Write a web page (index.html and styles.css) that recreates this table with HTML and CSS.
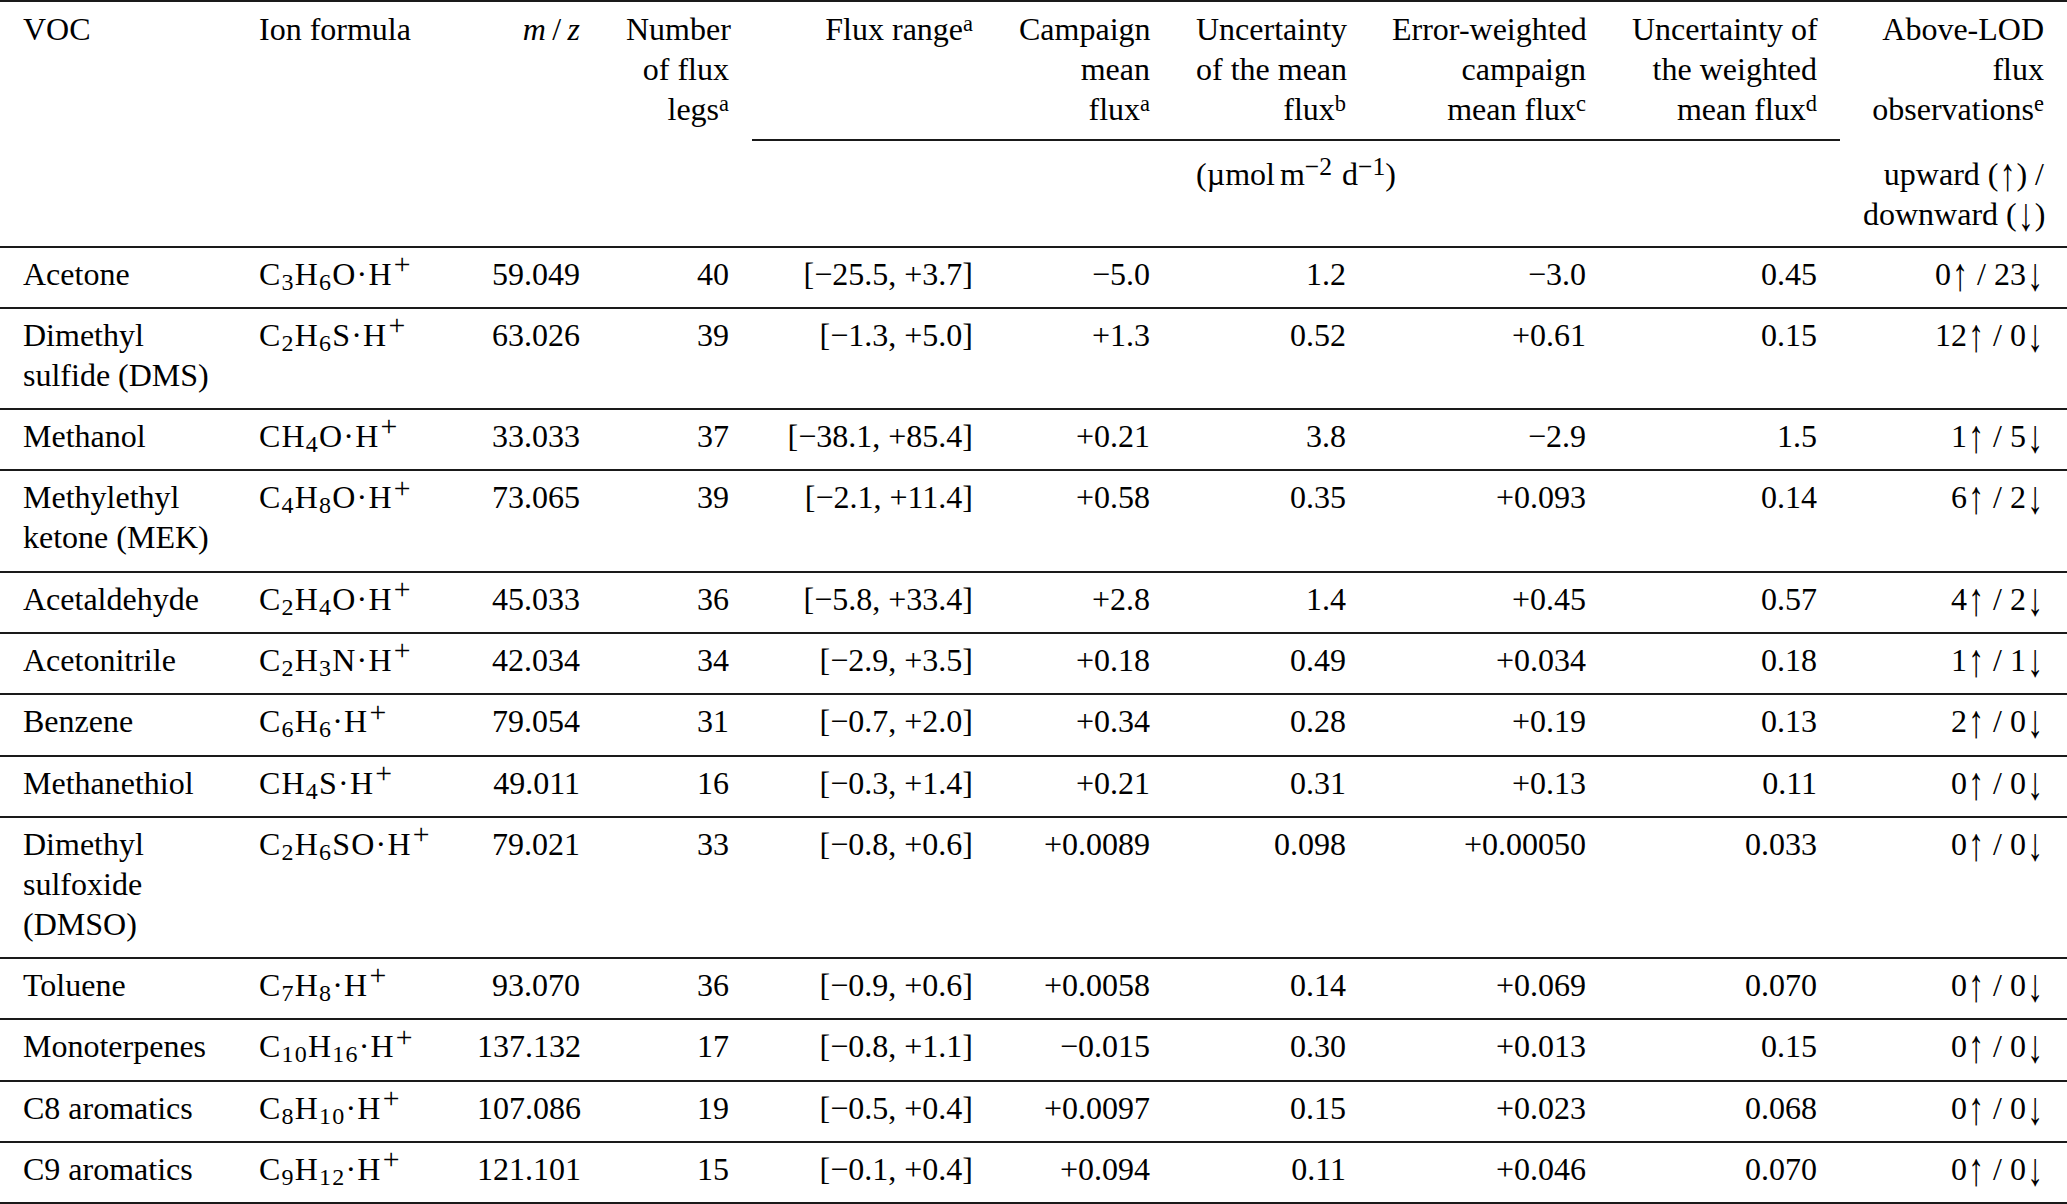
FILE: index.html
```html
<!DOCTYPE html>
<html lang="en">
<head>
<meta charset="utf-8">
<title>VOC flux table</title>
<link rel="stylesheet" href="styles.css">
</head>
<body>
<table class="flux-table">
  <colgroup>
    <col class="c-voc"><col class="c-ion"><col class="c-mz"><col class="c-legs"><col class="c-range">
    <col class="c-mean"><col class="c-unc"><col class="c-wmean"><col class="c-wunc"><col class="c-lod">
  </colgroup>
  <thead>
    <tr class="head-main">
      <th class="left span2" rowspan="2">VOC</th>
      <th class="left span2" rowspan="2">Ion formula</th>
      <th class="right span2" rowspan="2"><i>m</i>&thinsp;/&thinsp;<i>z</i></th>
      <th class="right span2" rowspan="2">Number<br>of flux<br>legs<sup>a</sup></th>
      <th class="right grp">Flux range<sup>a</sup></th>
      <th class="right grp">Campaign<br>mean<br>flux<sup>a</sup></th>
      <th class="right grp">Uncertainty<br>of the mean<br>flux<sup>b</sup></th>
      <th class="right grp">Error-weighted<br>campaign<br>mean flux<sup>c</sup></th>
      <th class="right grp">Uncertainty of<br>the weighted<br>mean flux<sup>d</sup></th>
      <th class="right">Above-LOD<br>flux<br>observations<sup>e</sup></th>
    </tr>
    <tr class="head-sub">
      <th class="center units" colspan="5">(µmol<span class="gap-s"></span>m<sup>−2</sup><span class="gap"></span>d<sup>−1</sup>)</th>
      <th class="right">upward (<span class="arr">↑</span>) /<br>downward (<span class="arr">↓</span>)</th>
    </tr>
  </thead>
  <tbody>
    <tr>
      <td>Acetone</td>
      <td class="ion">C<sub>3</sub>H<sub>6</sub>O·H<sup>+</sup></td>
      <td class="right">59.049</td><td class="right">40</td><td class="right">[−25.5, +3.7]</td>
      <td class="right">−5.0</td><td class="right">1.2</td><td class="right">−3.0</td><td class="right">0.45</td>
      <td class="right">0<span class="arr">↑</span> / 23<span class="arr">↓</span></td>
    </tr>
    <tr>
      <td>Dimethyl<br>sulfide (DMS)</td>
      <td class="ion">C<sub>2</sub>H<sub>6</sub>S·H<sup>+</sup></td>
      <td class="right">63.026</td><td class="right">39</td><td class="right">[−1.3, +5.0]</td>
      <td class="right">+1.3</td><td class="right">0.52</td><td class="right">+0.61</td><td class="right">0.15</td>
      <td class="right">12<span class="arr">↑</span> / 0<span class="arr">↓</span></td>
    </tr>
    <tr>
      <td>Methanol</td>
      <td class="ion">CH<sub>4</sub>O·H<sup>+</sup></td>
      <td class="right">33.033</td><td class="right">37</td><td class="right">[−38.1, +85.4]</td>
      <td class="right">+0.21</td><td class="right">3.8</td><td class="right">−2.9</td><td class="right">1.5</td>
      <td class="right">1<span class="arr">↑</span> / 5<span class="arr">↓</span></td>
    </tr>
    <tr>
      <td>Methylethyl<br>ketone (MEK)</td>
      <td class="ion">C<sub>4</sub>H<sub>8</sub>O·H<sup>+</sup></td>
      <td class="right">73.065</td><td class="right">39</td><td class="right">[−2.1, +11.4]</td>
      <td class="right">+0.58</td><td class="right">0.35</td><td class="right">+0.093</td><td class="right">0.14</td>
      <td class="right">6<span class="arr">↑</span> / 2<span class="arr">↓</span></td>
    </tr>
    <tr>
      <td>Acetaldehyde</td>
      <td class="ion">C<sub>2</sub>H<sub>4</sub>O·H<sup>+</sup></td>
      <td class="right">45.033</td><td class="right">36</td><td class="right">[−5.8, +33.4]</td>
      <td class="right">+2.8</td><td class="right">1.4</td><td class="right">+0.45</td><td class="right">0.57</td>
      <td class="right">4<span class="arr">↑</span> / 2<span class="arr">↓</span></td>
    </tr>
    <tr>
      <td>Acetonitrile</td>
      <td class="ion">C<sub>2</sub>H<sub>3</sub>N·H<sup>+</sup></td>
      <td class="right">42.034</td><td class="right">34</td><td class="right">[−2.9, +3.5]</td>
      <td class="right">+0.18</td><td class="right">0.49</td><td class="right">+0.034</td><td class="right">0.18</td>
      <td class="right">1<span class="arr">↑</span> / 1<span class="arr">↓</span></td>
    </tr>
    <tr>
      <td>Benzene</td>
      <td class="ion">C<sub>6</sub>H<sub>6</sub>·H<sup>+</sup></td>
      <td class="right">79.054</td><td class="right">31</td><td class="right">[−0.7, +2.0]</td>
      <td class="right">+0.34</td><td class="right">0.28</td><td class="right">+0.19</td><td class="right">0.13</td>
      <td class="right">2<span class="arr">↑</span> / 0<span class="arr">↓</span></td>
    </tr>
    <tr>
      <td>Methanethiol</td>
      <td class="ion">CH<sub>4</sub>S·H<sup>+</sup></td>
      <td class="right">49.011</td><td class="right">16</td><td class="right">[−0.3, +1.4]</td>
      <td class="right">+0.21</td><td class="right">0.31</td><td class="right">+0.13</td><td class="right">0.11</td>
      <td class="right">0<span class="arr">↑</span> / 0<span class="arr">↓</span></td>
    </tr>
    <tr>
      <td>Dimethyl<br>sulfoxide<br>(DMSO)</td>
      <td class="ion">C<sub>2</sub>H<sub>6</sub>SO·H<sup>+</sup></td>
      <td class="right">79.021</td><td class="right">33</td><td class="right">[−0.8, +0.6]</td>
      <td class="right">+0.0089</td><td class="right">0.098</td><td class="right">+0.00050</td><td class="right">0.033</td>
      <td class="right">0<span class="arr">↑</span> / 0<span class="arr">↓</span></td>
    </tr>
    <tr>
      <td>Toluene</td>
      <td class="ion">C<sub>7</sub>H<sub>8</sub>·H<sup>+</sup></td>
      <td class="right">93.070</td><td class="right">36</td><td class="right">[−0.9, +0.6]</td>
      <td class="right">+0.0058</td><td class="right">0.14</td><td class="right">+0.069</td><td class="right">0.070</td>
      <td class="right">0<span class="arr">↑</span> / 0<span class="arr">↓</span></td>
    </tr>
    <tr>
      <td>Monoterpenes</td>
      <td class="ion">C<sub>10</sub>H<sub>16</sub>·H<sup>+</sup></td>
      <td class="right">137.132</td><td class="right">17</td><td class="right">[−0.8, +1.1]</td>
      <td class="right">−0.015</td><td class="right">0.30</td><td class="right">+0.013</td><td class="right">0.15</td>
      <td class="right">0<span class="arr">↑</span> / 0<span class="arr">↓</span></td>
    </tr>
    <tr>
      <td>C8 aromatics</td>
      <td class="ion">C<sub>8</sub>H<sub>10</sub>·H<sup>+</sup></td>
      <td class="right">107.086</td><td class="right">19</td><td class="right">[−0.5, +0.4]</td>
      <td class="right">+0.0097</td><td class="right">0.15</td><td class="right">+0.023</td><td class="right">0.068</td>
      <td class="right">0<span class="arr">↑</span> / 0<span class="arr">↓</span></td>
    </tr>
    <tr>
      <td>C9 aromatics</td>
      <td class="ion">C<sub>9</sub>H<sub>12</sub>·H<sup>+</sup></td>
      <td class="right">121.101</td><td class="right">15</td><td class="right">[−0.1, +0.4]</td>
      <td class="right">+0.094</td><td class="right">0.11</td><td class="right">+0.046</td><td class="right">0.070</td>
      <td class="right">0<span class="arr">↑</span> / 0<span class="arr">↓</span></td>
    </tr>
  </tbody>
</table>
</body>
</html>
```
FILE: styles.css
```css
html, body {
  margin: 0;
  padding: 0;
  background: #ffffff;
}

body {
  font-family: "Liberation Serif", "Times New Roman", serif;
  font-size: 32px;
  line-height: 40px;
  color: #000000;
}

.flux-table {
  width: 2067px;
  table-layout: fixed;
  border-collapse: separate;
  border-spacing: 0;
  border-top: 2px solid #1a1a1a;
}

.c-voc { width: 236px; }
.c-ion { width: 218px; }
.c-mz { width: 149px; }
.c-legs { width: 149px; }
.c-range { width: 244px; }
.c-mean { width: 177px; }
.c-unc { width: 196px; }
.c-wmean { width: 240px; }
.c-wunc { width: 231px; }
.c-lod { width: 227px; }

.flux-table th,
.flux-table td {
  font-weight: normal;
  padding: 0 23px;
  vertical-align: top;
  white-space: nowrap;
  text-align: left;
}

.flux-table .right { text-align: right; }
.flux-table .center { text-align: center; }
.flux-table .left { text-align: left; }

.head-main th {
  padding-top: 7px;
  padding-bottom: 10px;
}

.head-main th.grp {
  border-bottom: 2px solid #1a1a1a;
}

.head-main th.span2 {
  padding-bottom: 0;
  border-bottom: 2px solid #1a1a1a;
}

.head-sub th {
  padding-top: 13px;
  padding-bottom: 11.5px;
  border-bottom: 2px solid #1a1a1a;
}

.flux-table tbody td {
  padding-top: 6px;
  padding-bottom: 13.3px;
  border-bottom: 2px solid #1a1a1a;
}

.flux-table .ion {
  letter-spacing: 1.2px;
}

.flux-table sub {
  font-size: 0.75em;
  line-height: 0;
  vertical-align: -0.22em;
}

.flux-table sup {
  font-size: 0.7em;
  line-height: 0;
  vertical-align: 0.42em;
}

.flux-table .ion sup {
  font-size: 0.93em;
  vertical-align: 0.36em;
  margin-left: 1px;
}

.flux-table .units sup {
  font-size: 0.8em;
  vertical-align: 0.4em;
}

.units .gap-s {
  display: inline-block;
  width: 5px;
}

.units .gap {
  display: inline-block;
  width: 10px;
}

.arr {
  display: inline-block;
  padding: 0 1px;
  transform: scaleY(1.45);
}
```
